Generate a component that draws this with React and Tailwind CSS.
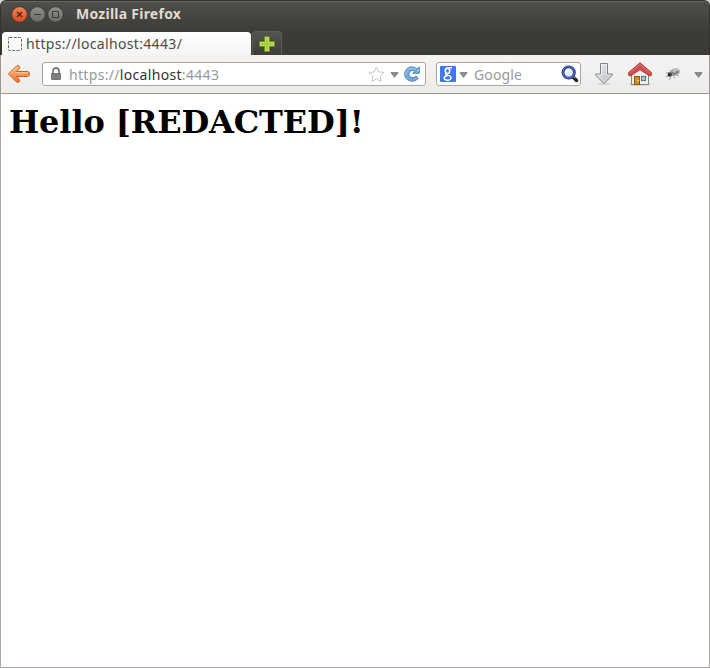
import React from "react";

const UI = "font-['Noto_Sans','Open_Sans',sans-serif]";

function WindowButtons() {
  return (
    <svg width="56" height="20" viewBox="0 0 56 20" className="ml-[9px] shrink-0">
      <defs>
        <linearGradient id="close" x1="0" y1="0" x2="0" y2="1">
          <stop offset="0" stopColor="#f4845b" />
          <stop offset="1" stopColor="#dc4a1c" />
        </linearGradient>
        <linearGradient id="grey" x1="0" y1="0" x2="0" y2="1">
          <stop offset="0" stopColor="#92908a" />
          <stop offset="1" stopColor="#6b6963" />
        </linearGradient>
      </defs>
      <circle cx="9.5" cy="10.5" r="7.8" fill="url(#close)" stroke="#35332f" strokeWidth=".8" />
      <path d="M7 8l5 5M12 8l-5 5" stroke="#4a2416" strokeWidth="1.3" />
      <circle cx="27.5" cy="10.5" r="7.8" fill="url(#grey)" stroke="#35332f" strokeWidth=".8" />
      <path d="M24 10.5h7" stroke="#3b3934" />
      <circle cx="45.5" cy="10.5" r="7.8" fill="url(#grey)" stroke="#35332f" strokeWidth=".8" />
      <rect x="42.5" y="7.5" width="6" height="6" fill="none" stroke="#3b3934" />
    </svg>
  );
}

function Plus() {
  return (
    <svg width="16" height="16" viewBox="0 0 16 16">
      <path d="M5.5.5h5v5h5v5h-5v5h-5v-5h-5v-5h5z" fill="#acd440" stroke="#648b23" />
      <path d="M6.500 1.500h3v5h5v3h-5v5h-3v-5h-5v-3h5z" fill="#a5cf39" stroke="#c3df66" />
    </svg>
  );
}

function BackArrow() {
  return (
    <svg width="24" height="20" viewBox="0 0 24 20">
      <defs>
        <linearGradient id="back" x1="0" y1="0" x2="0" y2="1">
          <stop offset="0" stopColor="#f9bd80" />
          <stop offset="1" stopColor="#e87435" />
        </linearGradient>
      </defs>
      <path
        d="M1.500 10L9.300 2.200Q11 .8 12.300 2.300 13.300 3.600 12 4.900L9.400 7.500H20.500Q22.500 7.700 22.500 10T20.500 12.500H9.400L12 15.100Q13.300 16.400 12.300 17.700 11 19.200 9.300 17.800Z"
        fill="url(#back)" stroke="#cf5a25" strokeLinejoin="round"
      />
      <path d="M3.200 9.800L10.200 3M8.500 8.700h12" fill="none" stroke="#fdd3a3" strokeWidth=".8" />
    </svg>
  );
}

function Lock() {
  return (
    <svg width="12" height="14" viewBox="0 0 12 14">
      <path d="M3 6.500V4a3 3 0 0 1 6 0v2.500" fill="none" stroke="#7c7c7c" strokeWidth="1.800" />
      <rect x="1" y="6" width="10" height="7" rx="1" fill="#777" />
      <path d="M1.500 8.500h9M1.500 10.500h9" stroke="#8b8b8b" strokeWidth=".7" />
    </svg>
  );
}

function Star() {
  return (
    <svg width="17" height="17" viewBox="0 0 17 17">
      <path d="M8.500 1l2.100 4.900 5.400.5-4 3.700 1.200 5.400-4.700-2.800-4.700 2.800L5 10.100 1 6.400l5.400-.5z" fill="#fff" stroke="#c6c6c6" strokeLinejoin="round" />
    </svg>
  );
}

function Caret() {
  return (
    <svg width="9" height="6" viewBox="0 0 9 6">
      <path d="M1 .7h7L4.500 5.300z" fill="#929292" stroke="#6f6f6f" strokeWidth=".9" strokeLinejoin="round" />
    </svg>
  );
}

function Reload() {
  return (
    <svg width="16" height="16" viewBox="0 0 16 16">
      <path
        d="M15.300.8V7.300H8.700L10.800 5.200Q8.500 3.700 6.300 5.200 4.300 7 5 9.300 6.200 11.900 9 11.600 10.700 11.300 12 10L14.300 12.500Q11.500 15.600 7.700 15.300 2.300 14.700.8 9.800-.2 4.800 3.900 1.900 8.700-.8 13 3Z"
        fill="#72a9d9" stroke="#4a82b5" strokeWidth=".9" strokeLinejoin="round"
      />
      <path d="M12.200 3.500Q8 .7 4.200 3.200 1.300 5.700 1.900 9.200M14.300 3v3.300" fill="none" stroke="#a9cdec" strokeWidth=".9" />
    </svg>
  );
}

function GoogleBadge() {
  return (
    <svg width="16" height="16" viewBox="0 0 16 16">
      <rect width="16" height="16" rx="1" fill="#3f76f4" />
      <ellipse cx="7.500" cy="4.800" rx="2.200" ry="2.700" fill="none" stroke="#fff" strokeWidth="1.600" />
      <path d="M8 1.800h4M6.200 7.200Q4.500 8.700 7.500 9.100 11 9.500 11 11.700 10.800 14.200 7.500 14.200 4.200 14.100 4.200 12 4.400 10 7.500 9.500" fill="none" stroke="#fff" strokeWidth="1.400" />
    </svg>
  );
}

function Magnifier() {
  return (
    <svg width="18" height="18" viewBox="0 0 18 18">
      <path d="M11.500 11.500l4 4" stroke="#252525" strokeWidth="3.400" strokeLinecap="round" />
      <path d="M13 12.300l.8.8" stroke="#aaa" strokeWidth="1.400" />
      <circle cx="7.700" cy="7.500" r="5.700" fill="#e9eefb" stroke="#243573" strokeWidth="2.800" />
      <circle cx="7.700" cy="7.500" r="5.600" fill="none" stroke="#4e70c8" strokeWidth="1.300" />
      <path d="M5.200 7.500Q5.200 5 7.700 5" fill="none" stroke="#fff" strokeWidth="1.500" />
    </svg>
  );
}

function Download() {
  return (
    <svg width="20" height="24" viewBox="0 0 20 24">
      <defs>
        <linearGradient id="down" x1="0" y1="0" x2="1" y2="1">
          <stop offset="0" stopColor="#f0f2f3" />
          <stop offset="1" stopColor="#b4babf" />
        </linearGradient>
      </defs>
      <ellipse cx="10" cy="21.800" rx="7" ry="1.600" fill="#dbdad8" />
      <path d="M6.500 1.500h7v10.500h4.500q1 .3.300 1.200L10 21.500 1.700 13.200q-.7-.9.300-1.200h4.500z" fill="url(#down)" stroke="#7f8486" strokeLinejoin="round" />
      <path d="M7.500 2.500h5V13h4L10 20l-6.500-7h4z" fill="none" stroke="#fff" strokeWidth=".7" opacity=".6" />
    </svg>
  );
}

function Home() {
  return (
    <svg width="24" height="24" viewBox="0 0 24 24">
      <ellipse cx="12" cy="22.800" rx="11" ry="1.100" fill="#d0cfcc" />
      <path d="M3.500 11.500L12 5l8.500 6.500v11h-17z" fill="#efefed" stroke="#85857f" />
      <rect x="6.500" y="14.500" width="5" height="8" fill="#d08f22" stroke="#8b5b08" />
      <circle cx="10.300" cy="18.500" r=".7" fill="#fff1b0" />
      <rect x="13.500" y="14.500" width="4" height="4" fill="#a9c5d6" stroke="#5a7484" />
      <path d="M12 .8L23.300 10.500V13.200L22 14 12 7.800 2 14 .7 13.200V10.500Z" fill="#d04f50" stroke="#a93638" strokeLinejoin="round" />
      <path d="M2 10.900L12 2.200l10 8.700" fill="none" stroke="#e58080" strokeWidth=".9" />
    </svg>
  );
}

function Bug() {
  return (
    <svg width="18" height="15" viewBox="0 0 18 15">
      <path d="M5 6L2 5.800M5 9l-3.500.7M7 10l-2 3.500M10 9.500l.3 2M12.500 8l2.500 1.300M7.500 4.500L6 3" stroke="#969696" strokeWidth=".9" />
      <ellipse cx="10.800" cy="5.200" rx="5.300" ry="3.600" transform="rotate(-20 10.800 5.200)" fill="#a3a3a3" />
      <ellipse cx="12" cy="3.600" rx="3.300" ry="1.700" transform="rotate(-15 12 3.600)" fill="#c2c2c2" />
      <ellipse cx="6" cy="7.500" rx="2.500" ry="2.300" fill="#555" />
      <circle cx="5.300" cy="7.700" r="1.300" fill="#222" />
      <path d="M8.500 5.500l2.500 1.500 2-2M12 4.500l2.500.7" fill="none" stroke="#5c5c5c" strokeWidth=".9" />
    </svg>
  );
}

export default function App() {
  return (
    <div className={`flex h-[668px] w-[710px] flex-col overflow-hidden bg-[#d9d9d9] ${UI}`}>
      <div className="flex h-[55px] shrink-0 flex-col rounded-t-[6px] border-x border-t border-[#33322e] bg-[#3c3b37]">
        <header className="flex h-[30px] shrink-0 items-start rounded-t-[5px] border-t border-[#66645e] bg-linear-to-b from-[#504e48] to-[#3d3c38] pt-[2px]">
          <WindowButtons />
          <span className="ml-[10px] text-[14px] leading-[20px] font-bold tracking-[0.25px] whitespace-nowrap text-[#dfdbd2]">
            Mozilla Firefox
          </span>
        </header>
        <nav className="flex flex-1 items-end">
          <div className="ml-px flex h-[23px] w-[249px] items-center rounded-t-[4px] bg-linear-to-b from-white to-[#f5f4f2] pl-[6px]">
            <svg width="14" height="14" viewBox="0 0 14 14">
              <rect x=".5" y=".5" width="13" height="13" rx="1" fill="none" stroke="#6b6b6b" strokeDasharray="3 1.300" />
            </svg>
            <span className="ml-[4px] text-[14px] tracking-[0.34px] whitespace-nowrap text-[#4c4c4c]">https://localhost:4443/</span>
          </div>
          <button className="ml-px flex h-[24px] w-[30px] items-center justify-center rounded-t-[4px] border border-b-0 border-[#5d5b56] bg-linear-to-b from-[#55534e] to-[#3e3d39] pr-px">
            <Plus />
          </button>
        </nav>
      </div>
      <div className="flex h-[39px] shrink-0 items-center border-x border-b border-[#9c9891] bg-linear-to-b from-[#f5f4f2] to-[#eeecea] pl-[6px]">
        <BackArrow />
        <div className="ml-[11px] flex h-[24px] w-[384px] items-center rounded-[3px] border border-[#aaa59e] bg-white pl-[7px]">
          <Lock />
          <span className="ml-[7px] text-[14px] tracking-[0.32px] whitespace-nowrap text-[#999]">
            https://<span className="text-[#333]">localhost</span>:4443
          </span>
          <div className="mr-[5px] ml-auto flex items-center">
            <Star />
            <span className="mt-[2px] mr-[5px] ml-[5px]"><Caret /></span>
            <Reload />
          </div>
        </div>
        <div className="ml-[10px] flex h-[24px] w-[145px] items-center rounded-[3px] border border-[#aaa59e] bg-white pl-[3px]">
          <GoogleBadge />
          <span className="mt-[2px] ml-[3px]"><Caret /></span>
          <span className="ml-[6px] text-[14px] tracking-[0.15px] text-[#999]">Google</span>
          <span className="mr-px ml-auto"><Magnifier /></span>
        </div>
        <span className="ml-[13px]"><Download /></span>
        <span className="ml-[14px]"><Home /></span>
        <span className="ml-[12px]"><Bug /></span>
        <span className="mt-[2px] ml-[12px]"><Caret /></span>
      </div>
      <main className="flex-1 border-x border-b border-[#aaa6a0] bg-white pt-[10px] pl-[8px]">
        <h1 className="font-['DejaVu_Serif',serif] text-[32px] leading-[37px] font-bold tracking-[-0.12px] whitespace-nowrap text-black">Hello [REDACTED]!</h1>
      </main>
    </div>
  );
}
